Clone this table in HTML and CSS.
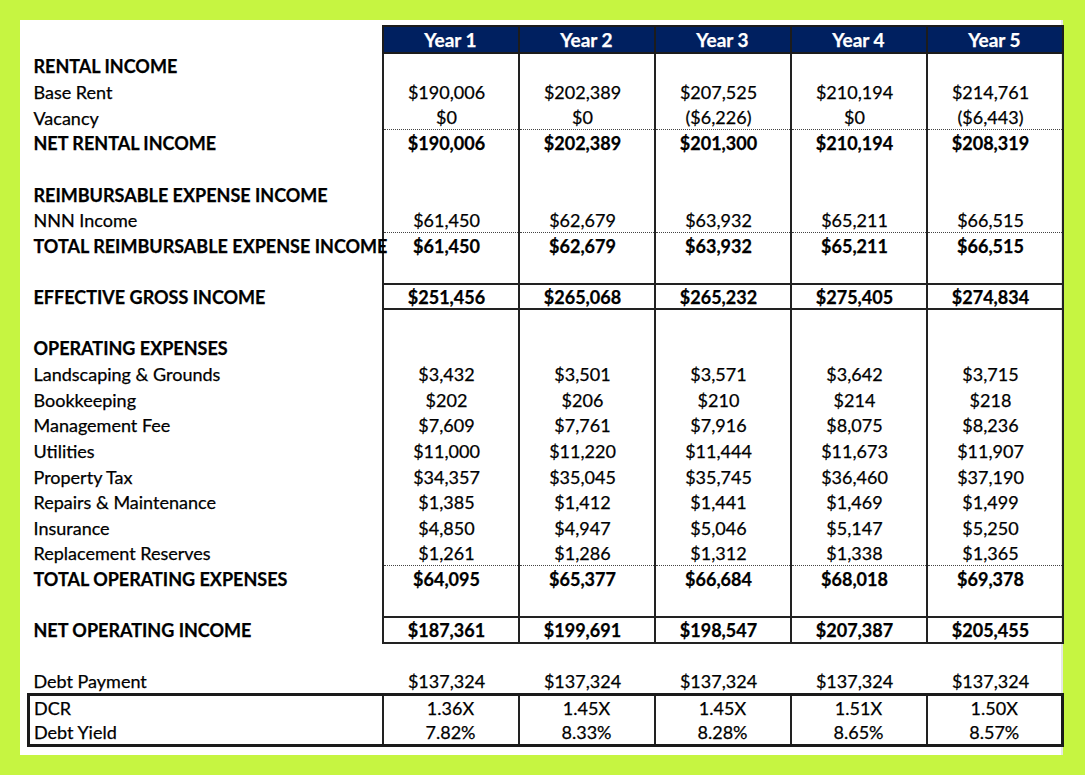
FILE: index.html
```html
<!DOCTYPE html>
<html>
<head>
<meta charset="utf-8">
<link rel="stylesheet" href="styles.css">
</head>
<body>
<div class="panel">
<table class="pf">
  <colgroup>
    <col class="c-label"><col class="c-num"><col class="c-num"><col class="c-num"><col class="c-num"><col class="c-num">
  </colgroup>
  <thead>
    <tr class="head">
      <th class="corner"></th><th>Year 1</th><th>Year 2</th><th>Year 3</th><th>Year 4</th><th>Year 5</th>
    </tr>
  </thead>
  <tbody>
    <tr class="bold"><td class="lbl">RENTAL INCOME</td><td></td><td></td><td></td><td></td><td></td></tr>
    <tr><td class="lbl">Base Rent</td><td>$190,006</td><td>$202,389</td><td>$207,525</td><td>$210,194</td><td>$214,761</td></tr>
    <tr><td class="lbl">Vacancy</td><td>$0</td><td>$0</td><td>($6,226)</td><td>$0</td><td>($6,443)</td></tr>
    <tr class="bold dot"><td class="lbl">NET RENTAL INCOME</td><td>$190,006</td><td>$202,389</td><td>$201,300</td><td>$210,194</td><td>$208,319</td></tr>
    <tr><td class="lbl"></td><td></td><td></td><td></td><td></td><td></td></tr>
    <tr class="bold"><td class="lbl">REIMBURSABLE EXPENSE INCOME</td><td></td><td></td><td></td><td></td><td></td></tr>
    <tr><td class="lbl">NNN Income</td><td>$61,450</td><td>$62,679</td><td>$63,932</td><td>$65,211</td><td>$66,515</td></tr>
    <tr class="bold dot"><td class="lbl">TOTAL REIMBURSABLE EXPENSE INCOME</td><td>$61,450</td><td>$62,679</td><td>$63,932</td><td>$65,211</td><td>$66,515</td></tr>
    <tr><td class="lbl"></td><td></td><td></td><td></td><td></td><td></td></tr>
    <tr class="bold box"><td class="lbl">EFFECTIVE GROSS INCOME</td><td>$251,456</td><td>$265,068</td><td>$265,232</td><td>$275,405</td><td>$274,834</td></tr>
    <tr><td class="lbl"></td><td></td><td></td><td></td><td></td><td></td></tr>
    <tr class="bold"><td class="lbl">OPERATING EXPENSES</td><td></td><td></td><td></td><td></td><td></td></tr>
    <tr><td class="lbl">Landscaping &amp; Grounds</td><td>$3,432</td><td>$3,501</td><td>$3,571</td><td>$3,642</td><td>$3,715</td></tr>
    <tr><td class="lbl">Bookkeeping</td><td>$202</td><td>$206</td><td>$210</td><td>$214</td><td>$218</td></tr>
    <tr><td class="lbl">Management Fee</td><td>$7,609</td><td>$7,761</td><td>$7,916</td><td>$8,075</td><td>$8,236</td></tr>
    <tr><td class="lbl">Utilities</td><td>$11,000</td><td>$11,220</td><td>$11,444</td><td>$11,673</td><td>$11,907</td></tr>
    <tr><td class="lbl">Property Tax</td><td>$34,357</td><td>$35,045</td><td>$35,745</td><td>$36,460</td><td>$37,190</td></tr>
    <tr><td class="lbl">Repairs &amp; Maintenance</td><td>$1,385</td><td>$1,412</td><td>$1,441</td><td>$1,469</td><td>$1,499</td></tr>
    <tr><td class="lbl">Insurance</td><td>$4,850</td><td>$4,947</td><td>$5,046</td><td>$5,147</td><td>$5,250</td></tr>
    <tr><td class="lbl">Replacement Reserves</td><td>$1,261</td><td>$1,286</td><td>$1,312</td><td>$1,338</td><td>$1,365</td></tr>
    <tr class="bold dot"><td class="lbl">TOTAL OPERATING EXPENSES</td><td>$64,095</td><td>$65,377</td><td>$66,684</td><td>$68,018</td><td>$69,378</td></tr>
    <tr><td class="lbl"></td><td></td><td></td><td></td><td></td><td></td></tr>
    <tr class="bold box"><td class="lbl">NET OPERATING INCOME</td><td>$187,361</td><td>$199,691</td><td>$198,547</td><td>$207,387</td><td>$205,455</td></tr>
    <tr class="open"><td class="lbl"></td><td></td><td></td><td></td><td></td><td></td></tr>
    <tr class="open"><td class="lbl">Debt Payment</td><td>$137,324</td><td>$137,324</td><td>$137,324</td><td>$137,324</td><td>$137,324</td></tr>
    <tr class="ratio top"><td class="lbl">DCR</td><td>1.36X</td><td>1.45X</td><td>1.45X</td><td>1.51X</td><td>1.50X</td></tr>
    <tr class="ratio bottom"><td class="lbl">Debt Yield</td><td>7.82%</td><td>8.33%</td><td>8.28%</td><td>8.65%</td><td>8.57%</td></tr>
  </tbody>
</table>
</div>
</body>
</html>
```

FILE: styles.css
```css
html, body {
  margin: 0;
  padding: 0;
  background: #c6f541;
}

.panel {
  margin: 20px 0 0 20px;
  width: 1043px;
  height: 735px;
  box-sizing: border-box;
  background: #ffffff;
  border-right: 2px solid #e6e8e2;
  padding: 5px 0 0 7px;
}

.pf {
  border-collapse: collapse;
  table-layout: fixed;
  width: 1034px;
  font-family: "Lato", "Liberation Sans", sans-serif;
  font-size: 18px;
  color: #000;
  -webkit-text-stroke: 0.25px #000;
}

.c-label { width: 354px; }
.c-num { width: 136px; }

.pf th, .pf td {
  padding: 1px 8px 0 0;
  text-align: center;
  white-space: nowrap;
  overflow: visible;
  height: 25.65px;
  box-sizing: border-box;
  line-height: 20px;
}

.pf tbody td {
  border-left: 2px solid #222;
  border-right: 2px solid #222;
}

.pf td.lbl {
  text-align: left;
  padding: 1px 0 0 5px;
  border: none;
}

.pf .head th {
  height: 27px;
  background: #002060;
  color: #fff;
  -webkit-text-stroke: 0.25px #fff;
  font-size: 19px;
  font-weight: 700;
  padding: 0;
  border: 2px solid #1c1c1c;
}

.pf .head th.corner {
  background: transparent;
  border: none;
}

.pf .bold td { font-weight: 700; }

.pf .dot td { border-top: 1px dotted #444; }

.pf .box td {
  border-top: 2px solid #222;
  border-bottom: 2px solid #222;
}

.pf .open td {
  border-left: none;
  border-right: none;
}

.pf .ratio td {
  padding-right: 0;
  border-left: 2px solid #222;
  border-right: 2px solid #222;
}

.pf .ratio td.lbl {
  border-left: 3px solid #1a1a1a;
  border-right: 2px solid #222;
  padding-left: 4px;
}

.pf .ratio.top td { border-top: 3px solid #1a1a1a; }
.pf .ratio.bottom td { border-bottom: 3px solid #1a1a1a; }
.pf .ratio td:last-child { border-right: 3px solid #1a1a1a; }
.pf .box td.lbl, .pf .dot td.lbl { border-top: none; border-bottom: none; }
```
